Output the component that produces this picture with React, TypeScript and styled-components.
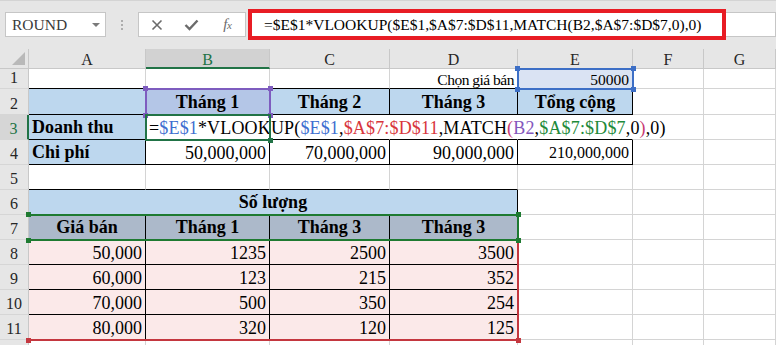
import React from 'react';
import styled, { createGlobalStyle } from 'styled-components';

const GlobalStyle = createGlobalStyle`
  html, body { margin: 0; padding: 0; background: #fff; overflow: hidden; }
  body { font-family: "Liberation Serif", "Times New Roman", serif; }
`;

const BLUE = '#bdd7ee';
const SEL = '#b4c6e7';
const E1BG = '#dae3f3';
const HEAD7 = '#acb9ca';
const PINK = '#fbe9e9';
const G = '#d4d4d4';
const K = '#000';
const N = 'transparent';
const XL_GREEN = '#217346';

const Page = styled.div`
  width: 776px;
  height: 345px;
  overflow: hidden;
  background: #fff;
`;

const Toolbar = styled.div`
  height: 49px;
  box-sizing: border-box;
  background: #e6e6e6;
  border-top: 1px solid #d4d4d4;
  display: flex;
  align-items: flex-start;
  padding: 11px 0 0 5px;
`;

const NameBox = styled.div`
  width: 101px;
  height: 25px;
  box-sizing: border-box;
  background: #fff;
  border: 1px solid #c6c6c6;
  display: flex;
  align-items: center;
  justify-content: space-between;
  padding: 0 5px 0 6px;
  font-size: 15.5px;
  color: #3a3a3a;
`;

const DropArrow = styled.span`
  width: 0;
  height: 0;
  border-left: 4px solid transparent;
  border-right: 4px solid transparent;
  border-top: 4px solid #7a7a7a;
`;

const Grip = styled.div`
  width: 32px;
  height: 25px;
  display: flex;
  flex-direction: column;
  align-items: center;
  justify-content: center;
  gap: 2px;
`;

const GripDot = styled.span`
  width: 2px;
  height: 2px;
  background: #adadad;
`;

const FxBox = styled.div`
  width: 108px;
  height: 25px;
  box-sizing: border-box;
  background: #fff;
  border: 1px solid #c6c6c6;
  display: flex;
  align-items: center;
`;

const FxButton = styled.div`
  width: 36px;
  height: 23px;
  display: flex;
  align-items: center;
  justify-content: center;
  color: #6b6b6b;
`;

const FxText = styled.span`
  font-style: italic;
  font-size: 15px;
  color: #6b6b6b;
  letter-spacing: -0.5px;
`;

const FxSmall = styled.span`
  font-size: 11px;
`;

const FormulaField = styled.div`
  flex: 1;
  height: 25px;
  box-sizing: border-box;
  background: #fff;
  border: 1px solid #c6c6c6;
  border-left: none;
  margin-left: 2px;
`;

const RedFrame = styled.div`
  width: 478px;
  height: 31px;
  box-sizing: border-box;
  margin-top: -4px;
  border: 4px solid #e81c24;
  display: flex;
  align-items: center;
  padding-left: 12px;
  font-size: 15.5px;
  color: #000;
  white-space: nowrap;
`;

const Sheet = styled.div`
  display: grid;
  grid-template-columns: 29px 117px 124px 120px 128px 115px 71px 72px;
  grid-template-rows: 20px 20px 26px repeat(10, 25px);
  background: #fff;
`;

const Corner = styled.div`
  grid-row: 1;
  grid-column: 1;
  position: relative;
  background: #e6e6e6;
  border-right: 1px solid #c8c8c8;
  border-bottom: 1px solid #c8c8c8;
  &::after {
    content: '';
    position: absolute;
    right: 3px;
    bottom: 3px;
    border-left: 13px solid transparent;
    border-bottom: 13px solid #b9b9b9;
  }
`;

const ColHead = styled.div<{ $active?: boolean; $gc: number }>`
  grid-row: 1;
  grid-column: ${p => p.$gc};
  box-sizing: border-box;
  background: ${p => (p.$active ? '#d2d2d2' : '#e6e6e6')};
  border-right: 1px solid #c8c8c8;
  border-bottom: ${p => (p.$active ? `2px solid ${XL_GREEN}` : '1px solid #c8c8c8')};
  color: ${p => (p.$active ? XL_GREEN : '#262626')};
  font-size: 16px;
  line-height: 20px;
  text-align: center;
  padding-top: 1px;
`;

const RowHead = styled.div<{ $active?: boolean; $gr: number }>`
  grid-row: ${p => p.$gr};
  grid-column: 1;
  box-sizing: border-box;
  background: ${p => (p.$active ? '#d6d6d6' : '#e6e6e6')};
  border-right: ${p => (p.$active ? `2px solid ${XL_GREEN}` : '1px solid #c8c8c8')};
  border-bottom: 1px solid #d6d6d6;
  color: ${p => (p.$active ? XL_GREEN : '#262626')};
  font-size: 16px;
  line-height: 20px;
  display: flex;
  align-items: flex-end;
  justify-content: center;
`;

type Align = 'left' | 'right' | 'center';

const Cell = styled.div<{
  $gr: number;
  $gc: number;
  $span: number;
  $bg?: string;
  $align?: Align;
  $bold?: boolean;
  $size?: number;
  $lh?: number;
  $ls?: number;
  $r?: string;
  $b?: string;
}>`
  grid-row: ${p => p.$gr};
  grid-column: ${p => p.$gc} / span ${p => p.$span};
  box-sizing: border-box;
  min-width: 0;
  display: flex;
  align-items: flex-end;
  justify-content: ${p => (p.$align === 'right' ? 'flex-end' : p.$align === 'center' ? 'center' : 'flex-start')};
  padding: 0 3px;
  background: ${p => p.$bg || 'transparent'};
  border-right: 1px solid ${p => p.$r || G};
  border-bottom: 1px solid ${p => p.$b || G};
  font-size: ${p => p.$size || 18}px;
  font-weight: ${p => (p.$bold ? 700 : 400)};
  line-height: ${p => p.$lh || (p.$bold ? 24 : 22)}px;
  letter-spacing: ${p => p.$ls || 0}px;
  color: #000;
  white-space: nowrap;
  overflow: visible;
`;

const Tok = styled.span<{ $c: string }>`
  color: ${p => p.$c};
`;

const RefRange = styled.div<{ $c: string; $col: string; $row: string; $noLeft?: boolean }>`
  grid-column: ${p => p.$col};
  grid-row: ${p => p.$row};
  position: relative;
  z-index: 2;
  pointer-events: none;
  margin: -1px -1px -1px ${p => (p.$noLeft ? '0' : '-1px')};
  border: 2px solid ${p => p.$c};
  ${p => (p.$noLeft ? 'border-left: none;' : '')}
`;

const Handle = styled.span<{ $c: string; $v: 'top' | 'bottom'; $h: 'left' | 'right'; $off?: number }>`
  position: absolute;
  width: 5px;
  height: 5px;
  background: ${p => p.$c};
  ${p => p.$v}: -4px;
  ${p => p.$h}: ${p => (p.$off !== undefined ? p.$off : -4)}px;
`;

type Spec = {
  t?: React.ReactNode;
  a?: Align;
  bold?: boolean;
  bg?: string;
  r?: string;
  b?: string;
  size?: number;
  lh?: number;
  ls?: number;
  span?: number;
};

const blueTok = '#3f6fd0';
const redTok = '#d8363c';
const purpleTok = '#8457bd';
const greenTok = '#1e8a3a';
const parenTok = '#c93a73';

const formulaCell = (
  <>
    =<Tok $c={blueTok}>$E$1</Tok>*VLOOKUP(<Tok $c={blueTok}>$E$1</Tok>,<Tok $c={redTok}>$A$7:$D$11</Tok>,MATCH
    <Tok $c={parenTok}>(</Tok>
    <Tok $c={purpleTok}>B2</Tok>,<Tok $c={greenTok}>$A$7:$D$7</Tok>,0<Tok $c={parenTok}>)</Tok>,0)
  </>
);

const hdr = (t: string, bg: string): Spec => ({ t, a: 'center', bold: true, bg, r: K, b: K });
const num = (t: string, bg?: string): Spec => ({ t, a: 'right', bg, r: K, b: K });

const rows: Spec[][] = [
  [
    { b: K }, { b: K }, { b: K },
    { t: 'Chọn giá bán', a: 'right', size: 15.5, lh: 16, ls: -0.5, b: K },
    { t: '50000', a: 'right', size: 15.5, lh: 16, bg: E1BG, b: K },
    {}, {},
  ],
  [
    { bg: BLUE, r: K, b: K },
    hdr('Tháng 1', SEL), hdr('Tháng 2', BLUE), hdr('Tháng 3', BLUE), hdr('Tổng cộng', BLUE),
    {}, {},
  ],
  [
    { t: 'Doanh thu', bold: true, bg: BLUE, r: K, b: K },
    { t: formulaCell, r: N, b: K, ls: 0.16 },
    { r: N, b: K }, { r: N, b: K }, { r: N, b: K },
    {}, {},
  ],
  [
    { t: 'Chi phí', bold: true, bg: BLUE, r: K, b: K },
    num('50,000,000'), num('70,000,000'), num('90,000,000'),
    { t: '210,000,000', a: 'right', size: 16, r: K, b: K },
    {}, {},
  ],
  [{ b: K }, { b: K }, { b: K }, { b: K }, {}, {}, {}],
  [{ t: 'Số lượng', a: 'center', bold: true, bg: BLUE, r: K, b: K, span: 4 }, {}, {}, {}],
  [hdr('Giá bán', HEAD7), hdr('Tháng 1', HEAD7), hdr('Tháng 3', HEAD7), hdr('Tháng 3', HEAD7), {}, {}, {}],
  [num('50,000', PINK), num('1235', PINK), num('2500', PINK), num('3500', PINK), {}, {}, {}],
  [num('60,000', PINK), num('123', PINK), num('215', PINK), num('352', PINK), {}, {}, {}],
  [num('70,000', PINK), num('500', PINK), num('350', PINK), num('254', PINK), {}, {}, {}],
  [num('80,000', PINK), num('320', PINK), num('120', PINK), num('125', PINK), {}, {}, {}],
  [{}, {}, {}, {}, {}, {}, {}],
];

const cols = ['A', 'B', 'C', 'D', 'E', 'F', 'G'];

const CloseIcon = () => (
  <svg width="12" height="12" viewBox="0 0 12 12">
    <path d="M1.5 1.5 L10.5 10.5 M10.5 1.5 L1.5 10.5" stroke="#6b6b6b" strokeWidth="1.6" fill="none" />
  </svg>
);

const CheckIcon = () => (
  <svg width="15" height="12" viewBox="0 0 15 12">
    <path d="M1.5 6 L5.5 10 L13.5 1.5" stroke="#6b6b6b" strokeWidth="2.4" fill="none" />
  </svg>
);

const corners: Array<['top' | 'bottom', 'left' | 'right']> = [
  ['top', 'left'],
  ['top', 'right'],
  ['bottom', 'left'],
  ['bottom', 'right'],
];

function renderRow(row: Spec[], i: number) {
  let col = 2;
  return row.map((c, j) => {
    const span = c.span || 1;
    const gc = col;
    col += span;
    return (
      <Cell
        key={j}
        $gr={i + 2}
        $gc={gc}
        $span={span}
        $bg={c.bg}
        $align={c.a}
        $bold={c.bold}
        $size={c.size}
        $lh={c.lh}
        $ls={c.ls}
        $r={c.r}
        $b={c.b}
      >
        {c.t}
      </Cell>
    );
  });
}

export default function App() {
  return (
    <Page>
      <GlobalStyle />
      <Toolbar>
        <NameBox>
          ROUND
          <DropArrow />
        </NameBox>
        <Grip>
          <GripDot />
          <GripDot />
          <GripDot />
        </Grip>
        <FxBox>
          <FxButton>
            <CloseIcon />
          </FxButton>
          <FxButton>
            <CheckIcon />
          </FxButton>
          <FxButton>
            <FxText>
              f<FxSmall>x</FxSmall>
            </FxText>
          </FxButton>
        </FxBox>
        <FormulaField>
          <RedFrame>=$E$1*VLOOKUP($E$1,$A$7:$D$11,MATCH(B2,$A$7:$D$7,0),0)</RedFrame>
        </FormulaField>
      </Toolbar>
      <Sheet>
        <Corner />
        {cols.map((c, k) => (
          <ColHead key={c} $gc={k + 2} $active={c === 'B'}>
            {c}
          </ColHead>
        ))}
        {rows.map((row, i) => (
          <React.Fragment key={i}>
            <RowHead $gr={i + 2} $active={i === 2}>
              {i + 1}
            </RowHead>
            {renderRow(row, i)}
          </React.Fragment>
        ))}

        <RefRange $c="#3d6fc6" $col="6" $row="2">
          {corners.map(([v, h]) => (
            <Handle key={v + h} $c="#3d6fc6" $v={v} $h={h} />
          ))}
        </RefRange>
        <RefRange $c="#7e5cbf" $col="3" $row="3">
          {corners.map(([v, h]) => (
            <Handle key={v + h} $c="#7e5cbf" $v={v} $h={h} />
          ))}
        </RefRange>
        <RefRange $c={XL_GREEN} $col="3" $row="4">
          <Handle $c={XL_GREEN} $v="bottom" $h="right" />
        </RefRange>
        <RefRange $c="#c4373f" $col="2 / span 4" $row="8 / span 5" $noLeft>
          <Handle $c="#c4373f" $v="bottom" $h="left" $off={-3} />
          <Handle $c="#c4373f" $v="bottom" $h="right" />
        </RefRange>
        <RefRange $c="#1e7a31" $col="2 / span 4" $row="8" $noLeft>
          {corners.map(([v, h]) => (
            <Handle key={v + h} $c="#1e7a31" $v={v} $h={h} $off={h === 'left' ? -3 : undefined} />
          ))}
        </RefRange>
      </Sheet>
    </Page>
  );
}
